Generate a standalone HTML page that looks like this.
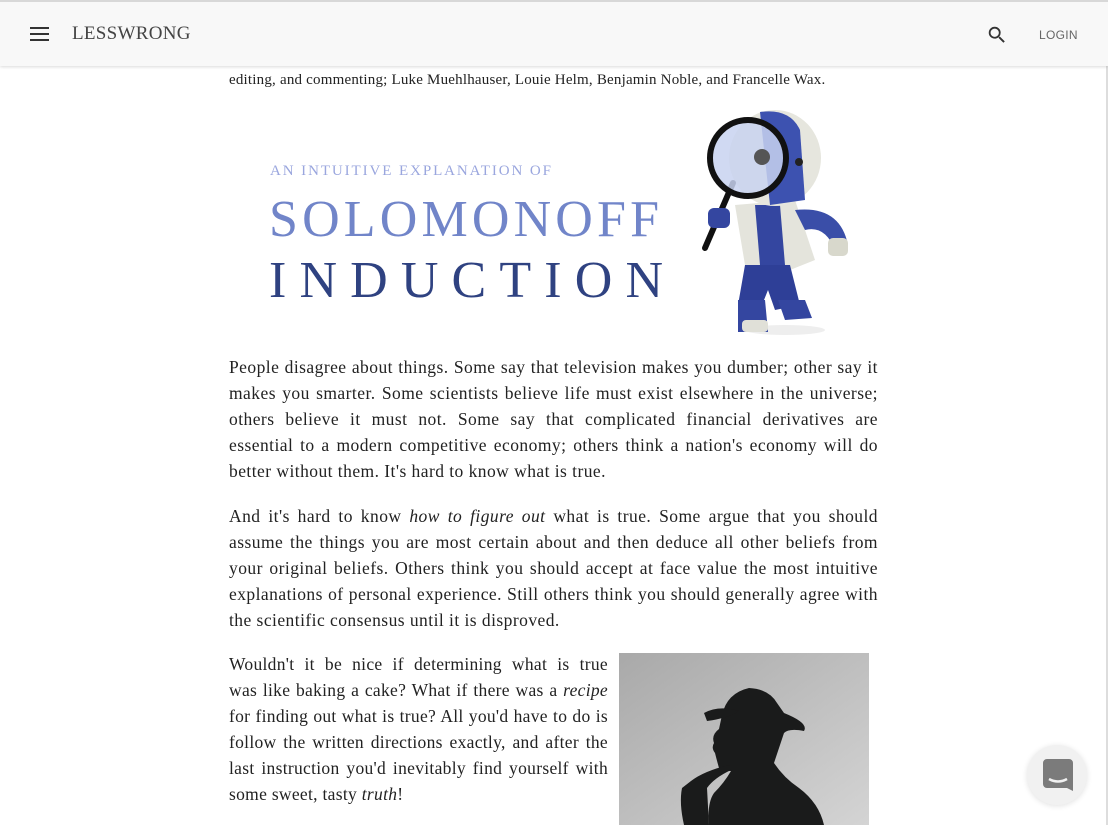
<!DOCTYPE html>
<html><head><meta charset="utf-8"><style>
html,body{margin:0;padding:0;background:#fff;width:1108px;height:825px;overflow:hidden;position:relative}
.hdr{position:absolute;left:0;top:0;width:1108px;height:66px;background:#f8f8f8;border-top:2px solid #d8d8d8;box-sizing:border-box;box-shadow:0 1px 3px rgba(0,0,0,.15);z-index:2}
.logo{position:absolute;left:72px;top:21px;font:19px "Liberation Serif",serif;color:#444;letter-spacing:0.3px}
.login{position:absolute;left:1039px;top:26px;font:12px "Liberation Sans",sans-serif;color:#666;letter-spacing:.3px}
.txt{position:absolute;left:229px;width:649px;font:17.5px/26px "Liberation Serif",serif;letter-spacing:.45px;color:#222;text-align:justify}
.j div{text-align:justify;text-align-last:justify;white-space:nowrap}
.j div.l{text-align-last:left}
.edge{position:absolute;left:1106px;top:0;width:2px;height:825px;background:#ddd}
</style></head><body>
<div class="hdr">
<svg style="position:absolute;left:30px;top:24px" width="20" height="16" viewBox="0 0 20 16"><rect x="0" y="1" width="19" height="2" fill="#333"/><rect x="0" y="7" width="19" height="2" fill="#333"/><rect x="0" y="13" width="19" height="2" fill="#333"/></svg>
<div class="logo">LESSWRONG</div>
<svg style="position:absolute;left:986px;top:22px" width="22" height="22" viewBox="0 0 24 24"><path d="M15.5 14h-.79l-.28-.27A6.47 6.47 0 0 0 16 9.5 6.5 6.5 0 1 0 9.5 16c1.61 0 3.09-.59 4.23-1.57l.27.28v.79l5 4.99L20.49 19l-4.99-5zm-6 0C7.01 14 5 11.99 5 9.5S7.01 5 9.5 5 14 7.01 14 9.5 11.99 14 9.5 14z" fill="#333"/></svg>
<div class="login">LOGIN</div>
</div>
<div class="txt" style="top:67px;font-size:15px;letter-spacing:.2px;text-align:left">editing, and commenting; Luke Muehlhauser, Louie Helm, Benjamin Noble, and Francelle Wax.</div>
<svg style="position:absolute;left:229px;top:100px" width="649" height="245" viewBox="229 100 649 245">
<text x="270" y="175" font-family="Liberation Serif,serif" font-size="15" fill="#9aa6de" textLength="281" lengthAdjust="spacing">AN INTUITIVE EXPLANATION OF</text>
<text x="269" y="236" font-family="Liberation Serif,serif" font-size="52" fill="#7185c9" textLength="390" lengthAdjust="spacing">SOLOMONOFF</text>
<text x="269" y="297" font-family="Liberation Serif,serif" font-size="52" fill="#2f4281" textLength="394" lengthAdjust="spacing">INDUCTION</text>
<ellipse cx="785" cy="330" rx="40" ry="5" fill="#eee"/>
<path d="M735 205 L795 200 L815 260 L790 270 L745 265 Z" fill="#e4e4dc"/>
<path d="M755 205 L780 205 L785 265 L760 265 Z" fill="#3446a0"/>
<path d="M795 210 Q840 205 848 245 L835 250 Q825 225 805 230 Z" fill="#3a4ea8"/>
<rect x="828" y="238" width="20" height="18" rx="5" fill="#d8d8cc"/>
<path d="M745 265 L790 265 L800 305 L775 310 L768 290 L760 310 L738 305 Z" fill="#2e3f97"/>
<path d="M738 300 L765 300 L768 332 L738 332 Z" fill="#3446a0"/>
<path d="M778 300 L805 300 L812 318 L785 320 Z" fill="#3446a0"/>
<rect x="742" y="320" width="26" height="12" rx="4" fill="#e0e0d8"/>
<ellipse cx="775" cy="158" rx="46" ry="48" fill="#e6e6de"/>
<path d="M760 112 Q790 108 800 130 L805 200 L770 205 Z" fill="#3d52b0"/>
<circle cx="799" cy="162" r="4" fill="#222"/>
<path d="M705 248 L733 183" stroke="#111" stroke-width="6" stroke-linecap="round"/>
<circle cx="748" cy="158" r="38" fill="#c8d2f0" fill-opacity="0.85" stroke="#111" stroke-width="6"/>
<circle cx="762" cy="157" r="8" fill="#555"/>
<rect x="708" y="208" width="22" height="20" rx="6" fill="#3446a0"/>
</svg>
<div class="txt" style="top:354px">People disagree about things. Some say that television makes you dumber; other say it makes you smarter. Some scientists believe life must exist elsewhere in the universe; others believe it must not. Some say that complicated financial derivatives are essential to a modern competitive economy; others think a nation's economy will do better without them. It's hard to know what is true.</div>
<div class="txt" style="top:503px">And it's hard to know <i>how to figure out</i> what is true. Some argue that you should assume the things you are most certain about and then deduce all other beliefs from your original beliefs. Others think you should accept at face value the most intuitive explanations of personal experience. Still others think you should generally agree with the scientific consensus until it is disproved.</div>
<div class="txt j" style="top:651px;width:379px;letter-spacing:.3px">
<div>Wouldn't it be nice if determining what is true</div>
<div>was like baking a cake? What if there was a <i>recipe</i></div>
<div>for finding out what is true? All you'd have to do is</div>
<div>follow the written directions exactly, and after the</div>
<div>last instruction you'd inevitably find yourself with</div>
<div class="l">some sweet, tasty <i>truth</i>!</div>
</div>
<svg style="position:absolute;left:619px;top:653px" width="250" height="172" viewBox="0 0 250 172">
<defs><linearGradient id="g" x1="0" y1="0" x2="1" y2="1"><stop offset="0" stop-color="#a9a9a9"/><stop offset="1" stop-color="#d4d4d4"/></linearGradient></defs>
<rect width="250" height="172" fill="url(#g)"/>
<path d="M103 62 Q108 40 130 35 Q150 36 158 50 L165 60 Q190 70 185 78 Q170 75 165 80 Q160 95 155 110 Q165 125 180 135 Q200 150 205 172 L90 172 Q88 150 95 140 Q105 130 112 118 Q105 118 100 115 Q98 108 96 100 Q92 95 95 90 Q92 82 100 76 Z" fill="#1a1b1b"/>
<path d="M85 60 Q100 52 120 58 Q110 65 88 68 Z" fill="#1a1b1b"/>
<path d="M65 172 Q60 150 63 135 L72 128 Q85 118 110 112 L112 117 Q95 125 88 135 L90 172 Z" fill="#1a1b1b"/>
</svg>
<div style="position:absolute;left:1027px;top:745px;width:60px;height:60px;border-radius:50%;background:#f1f1f1;box-shadow:0 1px 6px rgba(0,0,0,.12)"></div>
<svg style="position:absolute;left:1043px;top:759px" width="30" height="32" viewBox="0 0 30 32"><path d="M4 0h22a4 4 0 0 1 4 4v28l-6-3H4a4 4 0 0 1-4-4V4a4 4 0 0 1 4-4z" fill="#7b7b7b"/><path d="M6 20 Q15 25 24 20" stroke="#f1f1f1" stroke-width="2.5" fill="none"/></svg>
<div class="edge"></div>
</body></html>
